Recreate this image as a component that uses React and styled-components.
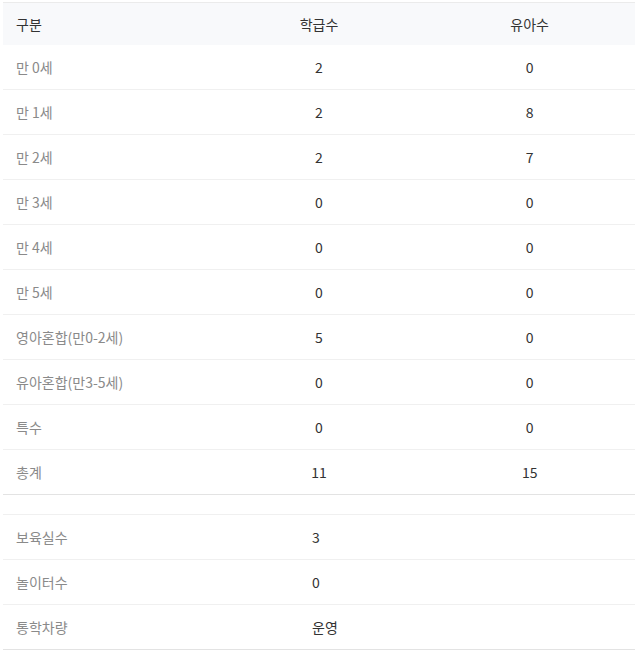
import styled, { createGlobalStyle } from 'styled-components';

const GlobalStyle = createGlobalStyle`
    body {
        margin: 0;
        background: #fff;
        font-family: 'Noto Sans CJK KR', 'Noto Sans', sans-serif;
    }
`;

const Wrapper = styled.div`
    padding: 2px 3px;
    width: 632px;
`;

const Table = styled.table`
    width: 100%;
    border-collapse: collapse;
    table-layout: fixed;
    font-size: 14px;
    border-top: 1px solid ${(p) => p.$topLine};
    border-bottom: 1px solid #e3e3e3;
    margin-bottom: ${(p) => p.$gap || 0}px;

    tr {
        border-bottom: 1px solid #f0f0f0;
    }
    tr:last-child {
        border-bottom: none;
    }
`;

const HeadCell = styled.th`
    height: 42px;
    padding: 0 13px;
    background: #f8f9fb;
    color: #333;
    font-weight: 400;
    text-align: ${(p) => p.$align || 'center'};
`;

const Label = styled.td`
    height: 44px;
    padding: 0 13px;
    color: #8a8a8a;
    text-align: left;
    width: ${(p) => p.$width || 'auto'};
`;

const Value = styled.td`
    height: 44px;
    padding: 0 13px;
    color: #333;
    text-align: ${(p) => p.$align || 'center'};
`;

const classRows = [
    ['만 0세', 2, 0],
    ['만 1세', 2, 8],
    ['만 2세', 2, 7],
    ['만 3세', 0, 0],
    ['만 4세', 0, 0],
    ['만 5세', 0, 0],
    ['영아혼합(만0-2세)', 5, 0],
    ['유아혼합(만3-5세)', 0, 0],
    ['특수', 0, 0],
    ['총계', 11, 15],
];

const facilityRows = [
    ['보육실수', '3'],
    ['놀이터수', '0'],
    ['통학차량', '운영'],
];

export default function App() {
    return (
        <Wrapper>
            <GlobalStyle />
            <Table $topLine='#ebebeb' $gap={19}>
                <thead>
                    <tr>
                        <HeadCell $align='left'>구분</HeadCell>
                        <HeadCell>학급수</HeadCell>
                        <HeadCell>유아수</HeadCell>
                    </tr>
                </thead>
                <tbody>
                    {classRows.map(([label, classes, kids]) => (
                        <tr key={label}>
                            <Label>{label}</Label>
                            <Value>{classes}</Value>
                            <Value>{kids}</Value>
                        </tr>
                    ))}
                </tbody>
            </Table>
            <Table $topLine='#f0f0f0'>
                <tbody>
                    {facilityRows.map(([label, value]) => (
                        <tr key={label}>
                            <Label $width='270px'>{label}</Label>
                            <Value $align='left'>{value}</Value>
                        </tr>
                    ))}
                </tbody>
            </Table>
        </Wrapper>
    );
}
